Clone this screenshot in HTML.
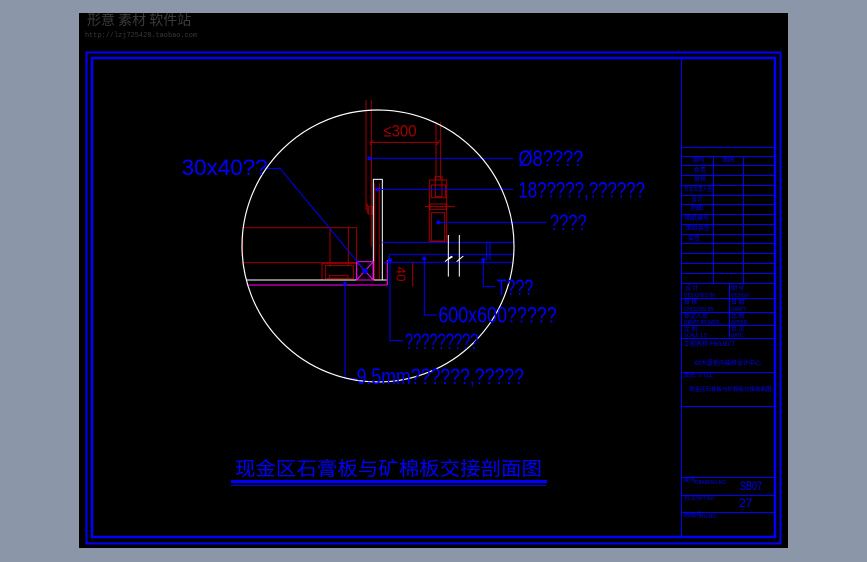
<!DOCTYPE html>
<html><head><meta charset="utf-8"><style>
html,body{margin:0;padding:0;background:#8b97a9;width:867px;height:562px;overflow:hidden}
svg{position:absolute;left:0;top:0}
</style></head><body>
<svg width="867" height="562" viewBox="0 0 867 562" xmlns="http://www.w3.org/2000/svg" font-family="Liberation Sans, 'Noto Sans CJK SC', sans-serif">
<rect x="79" y="13" width="709" height="535" fill="#000"/>
<text x="87" y="25" font-size="14" fill="#3a3a3a" font-family="'Noto Sans CJK SC',sans-serif">形意 素材 软件站</text>
<text x="85" y="37" font-size="7" fill="#3a3a3a" textLength="112" lengthAdjust="spacingAndGlyphs" font-family="Liberation Mono, monospace">http://lzj725428.taobao.com</text>
<rect x="86.5" y="52.5" width="694" height="491" fill="none" stroke="#0000ff" stroke-width="2"/>
<rect x="92" y="58" width="683" height="479" fill="none" stroke="#0000ff" stroke-width="2.5"/>
<g stroke="#0000ff" stroke-width="1" fill="none">
<line x1="681.5" y1="58" x2="681.5" y2="537"/>
<line x1="682" y1="147.5" x2="775" y2="147.5"/><line x1="682" y1="156.5" x2="775" y2="156.5"/>
<line x1="682" y1="165.5" x2="775" y2="165.5"/><line x1="682" y1="175.5" x2="775" y2="175.5"/>
<line x1="682" y1="185.5" x2="775" y2="185.5"/><line x1="682" y1="195.5" x2="775" y2="195.5"/>
<line x1="682" y1="204.5" x2="775" y2="204.5"/><line x1="682" y1="214.5" x2="775" y2="214.5"/>
<line x1="682" y1="224.5" x2="775" y2="224.5"/><line x1="682" y1="234.5" x2="775" y2="234.5"/>
<line x1="682" y1="243.5" x2="775" y2="243.5"/><line x1="682" y1="253.5" x2="775" y2="253.5"/>
<line x1="682" y1="263.5" x2="775" y2="263.5"/><line x1="682" y1="273.5" x2="775" y2="273.5"/>
<line x1="682" y1="283.5" x2="775" y2="283.5"/><line x1="682" y1="298.5" x2="775" y2="298.5"/>
<line x1="682" y1="312.5" x2="775" y2="312.5"/><line x1="682" y1="325.5" x2="775" y2="325.5"/>
<line x1="682" y1="338.5" x2="775" y2="338.5"/><line x1="682" y1="372.5" x2="775" y2="372.5"/>
<line x1="682" y1="406.5" x2="775" y2="406.5"/><line x1="682" y1="477.5" x2="775" y2="477.5"/>
<line x1="682" y1="495.5" x2="775" y2="495.5"/><line x1="682" y1="512.5" x2="775" y2="512.5"/>
<line x1="713.5" y1="156" x2="713.5" y2="283"/><line x1="743.5" y1="156" x2="743.5" y2="283"/>
<line x1="729.5" y1="283" x2="729.5" y2="338"/>
</g>
<g fill="#0000ff" font-size="6" font-family="'Noto Sans CJK SC',sans-serif">
<text x="693" y="162">图号</text><text x="723" y="162">图名</text>
<text x="694" y="172">负责</text><text x="694" y="181">审核</text><text x="684" y="191" textLength="28" lengthAdjust="spacingAndGlyphs">专业负责人签</text>
<text x="691" y="201">设计</text><text x="691" y="210">制图</text><text x="685" y="220">图纸编号</text>
<text x="686" y="230">图纸会签</text><text x="688" y="240">会签</text>
<text x="685" y="290">设 计</text><text x="684" y="297" font-size="5">DESIGNED BY</text>
<text x="731" y="290">图 号</text><text x="731" y="297" font-size="5">DESIGN</text>
<text x="684" y="304">审 核</text><text x="684" y="311" font-size="5">CHECKED BY</text>
<text x="731" y="304">日 期</text><text x="731" y="311" font-size="5">DRAFT</text>
<text x="684" y="318">审定人员</text><text x="684" y="324" font-size="5">DRAFT BY DATE</text>
<text x="731" y="318">比 例</text><text x="731" y="324" font-size="5">APPRD</text>
<text x="684" y="331">比 例</text><text x="684" y="337" font-size="5">SCALE    1:5</text>
<text x="731" y="331">页 次</text><text x="731" y="337" font-size="5">DATE</text>
<text x="684" y="346">工程名称 PROJECT</text>
<text x="694" y="365">XX大厦室内装修设计中心</text>
<text x="684" y="377">图名 TITLE</text>
<text x="689" y="391" font-size="5.5">现金区石膏板与矿棉板交接剖面图</text>
<text x="684" y="482">图号</text><text x="695" y="484" font-size="5">DRAWING NO</text>
<text x="684" y="500">页次</text><text x="696" y="500" font-size="5">SHT NO</text>
<text x="684" y="517">版图号</text><text x="700" y="518" font-size="5">NO.NO</text>
</g>
<text x="740" y="490" font-size="12" fill="#0000ff" textLength="22" lengthAdjust="spacingAndGlyphs">SB07</text>
<text x="739" y="507" font-size="12" fill="#0000ff">27</text>
<text x="235" y="475" font-size="19" fill="#0000ff" textLength="307" lengthAdjust="spacingAndGlyphs" font-family="'Noto Sans CJK SC',sans-serif">现金区石膏板与矿棉板交接剖面图</text>
<rect x="231" y="480" width="316" height="3" fill="#0000ff"/>
<rect x="231" y="485" width="315" height="1" fill="#0000ff"/>
<defs><clipPath id="c"><circle cx="624" cy="438" r="408"/></clipPath></defs>
<g transform="translate(170,100) scale(0.33333)">
<g fill="none" stroke-width="3" stroke="#a00000">
<line x1="588" y1="0" x2="588" y2="330"/><line x1="604" y1="0" x2="604" y2="310"/>
<line x1="798" y1="65" x2="798" y2="240"/><line x1="812" y1="65" x2="812" y2="240"/>
</g>
<g clip-path="url(#c)" fill="none" stroke-width="3">
<g stroke="#a00000">
<line x1="592" y1="310" x2="592" y2="340"/><line x1="604" y1="310" x2="604" y2="440"/><line x1="614" y1="250" x2="614" y2="540"/>
<line x1="628" y1="250" x2="628" y2="540"/><rect x="596" y="320" width="10" height="22"/>
<line x1="598" y1="127" x2="808" y2="127"/><line x1="600" y1="135" x2="610" y2="120"/><line x1="800" y1="135" x2="810" y2="120"/>
<rect x="778" y="240" width="52" height="185"/><rect x="796" y="230" width="20" height="60"/>
<rect x="784" y="255" width="42" height="38"/><line x1="765" y1="320" x2="855" y2="320"/>
<rect x="780" y="312" width="48" height="16"/><rect x="784" y="338" width="40" height="85"/>
<rect x="218" y="383" width="342" height="105"/>
<line x1="480" y1="383" x2="480" y2="500"/><line x1="535" y1="383" x2="535" y2="495"/>
<rect x="456" y="490" width="104" height="50"/><rect x="466" y="497" width="84" height="38"/><rect x="478" y="527" width="56" height="8"/>
</g>
<rect x="610" y="238" width="27" height="302" stroke="#fff"/>
<line x1="230" y1="540" x2="650" y2="540" stroke="#fff"/>
<g stroke="#ff00ff"><rect x="560" y="485" width="50" height="55"/><line x1="560" y1="485" x2="610" y2="540"/><line x1="610" y1="485" x2="560" y2="540"/>
<line x1="235" y1="555" x2="652" y2="555"/><line x1="652" y1="480" x2="652" y2="555"/></g>
<g stroke="#0000ff">
<line x1="637" y1="427" x2="1040" y2="427"/><line x1="658" y1="463" x2="1040" y2="463"/><line x1="640" y1="487" x2="1040" y2="487"/>
<line x1="658" y1="463" x2="658" y2="487"/><line x1="950" y1="427" x2="950" y2="480"/><line x1="960" y1="427" x2="960" y2="480"/>
</g>
<g stroke="#fff"><line x1="835" y1="405" x2="835" y2="530"/><line x1="868" y1="405" x2="868" y2="530"/>
<polyline points="825,485 845,468 835,478 848,470"/><polyline points="860,485 880,468"/></g>
<line x1="728" y1="487" x2="728" y2="560" stroke="#a00000"/>
</g>
<g stroke="#0000ff" stroke-width="3" fill="none">
<line x1="598" y1="175" x2="1030" y2="175"/><line x1="622" y1="268" x2="1030" y2="268"/>
<line x1="805" y1="367" x2="1130" y2="367"/>
<polyline points="585,513 330,205 285,205"/>
<polyline points="940,480 940,560 975,560"/><polyline points="763,476 763,645 800,645"/>
<polyline points="660,480 660,722 700,722"/><polyline points="525,552 525,835 560,835"/>
</g>
<circle cx="624" cy="438" r="408" fill="none" stroke="#fff" stroke-width="3.5"/>
<g fill="#0000ff">
<circle cx="598" cy="175" r="6"/><circle cx="622" cy="268" r="6"/><circle cx="805" cy="367" r="6"/>
<circle cx="585" cy="513" r="8"/><circle cx="940" cy="480" r="6"/><circle cx="763" cy="476" r="6"/>
<circle cx="660" cy="480" r="6"/><circle cx="525" cy="552" r="6"/>
</g>
<g fill="#0000ff" font-size="66">
<text x="1045" y="198" textLength="195" lengthAdjust="spacingAndGlyphs">Ø8????</text>
<text x="1045" y="292" textLength="380" lengthAdjust="spacingAndGlyphs">18?????,??????</text>
<text x="1140" y="390" textLength="110" lengthAdjust="spacingAndGlyphs">????</text>
<text x="35" y="225" textLength="258" lengthAdjust="spacingAndGlyphs">30x40??</text>
<text x="980" y="585" textLength="110" lengthAdjust="spacingAndGlyphs">T???</text>
<text x="805" y="667" textLength="355" lengthAdjust="spacingAndGlyphs">600x600?????</text>
<text x="705" y="747" textLength="220" lengthAdjust="spacingAndGlyphs">?????????</text>
<text x="560" y="852" textLength="502" lengthAdjust="spacingAndGlyphs">9.5mm??????,?????</text>
</g>
<text x="640" y="110" font-size="50" fill="#a00000" textLength="100" lengthAdjust="spacingAndGlyphs">≤300</text>
<text x="0" y="0" font-size="40" fill="#a00000" transform="translate(680,500) rotate(90)">40</text>
</g>
</svg>
</body></html>
